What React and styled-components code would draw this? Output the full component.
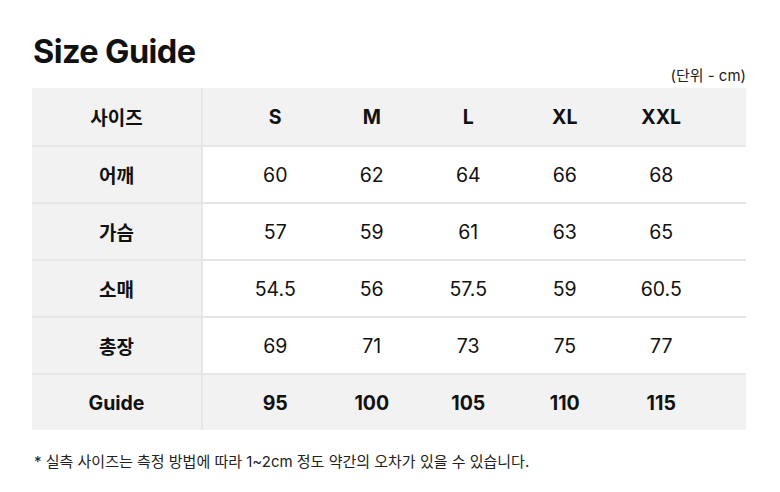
import React from "react";
import styled, { createGlobalStyle } from "styled-components";

const Global = createGlobalStyle`
  html, body { margin: 0; padding: 0; background: #fff; }
  body { font-family: Inter, "Noto Sans CJK KR", "Noto Sans", sans-serif; color: #111; }
`;

const Page = styled.div`
  width: 780px;
  height: 492px;
  box-sizing: border-box;
  padding: 32px 34px 0 32px;
`;

const Title = styled.h1`
  margin: 0 0 0 1px;
  font-size: 32.5px;
  font-weight: 700;
  letter-spacing: -0.6px;
  line-height: 40px;
  color: #111;
`;

const Unit = styled.div`
  text-align: right;
  font-size: 15px;
  line-height: 18px;
  color: #222;
  margin-top: -5px;
  margin-bottom: 3px;
`;

const Table = styled.div`
  display: flex;
  flex-direction: column;
`;

const Row = styled.div`
  display: flex;
  height: 57px;
  box-sizing: border-box;
  background: ${p => (p.$shaded ? "#f2f2f2" : "#fff")};
  border-top: ${p => (p.$first ? "none" : "2px solid #e6e6e6")};
`;

const Label = styled.div`
  width: 171px;
  flex: none;
  box-sizing: border-box;
  background: #f2f2f2;
  border-right: 2px solid #e6e6e6;
  display: flex;
  align-items: center;
  justify-content: center;
  font-size: ${p => (p.$latin ? "19.5px" : "19px")};
  font-weight: 700;
  color: #111;
`;

const Values = styled.div`
  display: grid;
  grid-template-columns: repeat(5, 96.5px);
  padding-left: 24px;
  align-items: center;
`;

const Cell = styled.div`
  text-align: center;
  font-size: 19.5px;
  font-weight: ${p => (p.$bold ? 700 : 400)};
  color: #111;
`;

const Note = styled.p`
  margin: 20px 0 0 2px;
  font-size: 15px;
  color: #222;
  letter-spacing: 0;
`;

const sizes = ["S", "M", "L", "XL", "XXL"];
const rows = [
  { label: "어깨", values: ["60", "62", "64", "66", "68"] },
  { label: "가슴", values: ["57", "59", "61", "63", "65"] },
  { label: "소매", values: ["54.5", "56", "57.5", "59", "60.5"] },
  { label: "총장", values: ["69", "71", "73", "75", "77"] },
];

export default function App() {
  return (
    <Page>
      <Global />
      <Title>Size Guide</Title>
      <Unit>(단위 - cm)</Unit>
      <Table>
        <Row $first $shaded>
          <Label>사이즈</Label>
          <Values>
            {sizes.map(s => (
              <Cell key={s} $bold>{s}</Cell>
            ))}
          </Values>
        </Row>
        {rows.map(r => (
          <Row key={r.label}>
            <Label>{r.label}</Label>
            <Values>
              {r.values.map((v, i) => (
                <Cell key={i}>{v}</Cell>
              ))}
            </Values>
          </Row>
        ))}
        <Row $shaded>
          <Label $latin>Guide</Label>
          <Values>
            {["95", "100", "105", "110", "115"].map(v => (
              <Cell key={v} $bold>{v}</Cell>
            ))}
          </Values>
        </Row>
      </Table>
      <Note>* 실측 사이즈는 측정 방법에 따라 1~2cm 정도 약간의 오차가 있을 수 있습니다.</Note>
    </Page>
  );
}
